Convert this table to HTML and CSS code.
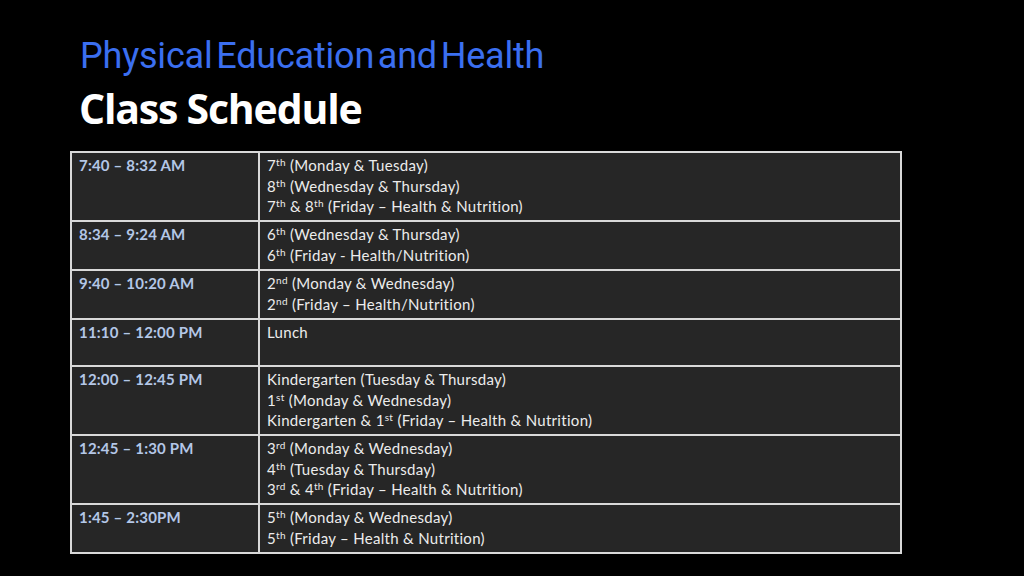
FILE: index.html
```html
<!DOCTYPE html>
<html>
<head>
<meta charset="utf-8">
<link rel="stylesheet" href="styles.css">
</head>
<body>
<div class="slide">
  <header class="head">
    <h1 class="title">Physical Education and Health</h1>
    <h2 class="subtitle">Class Schedule</h2>
  </header>
  <table class="sched">
    <tr class="r3">
      <td class="time">7:40 – 8:32 AM</td>
      <td class="desc">7<sup>th</sup> (Monday &amp; Tuesday)<br>8<sup>th</sup> (Wednesday &amp; Thursday)<br>7<sup>th</sup> &amp; 8<sup>th</sup> (Friday – Health &amp; Nutrition)</td>
    </tr>
    <tr class="r2">
      <td class="time">8:34 – 9:24 AM</td>
      <td class="desc">6<sup>th</sup> (Wednesday &amp; Thursday)<br>6<sup>th</sup> (Friday - Health/Nutrition)</td>
    </tr>
    <tr class="r2">
      <td class="time">9:40 – 10:20 AM</td>
      <td class="desc">2<sup>nd</sup> (Monday &amp; Wednesday)<br>2<sup>nd</sup> (Friday – Health/Nutrition)</td>
    </tr>
    <tr class="r1">
      <td class="time">11:10 – 12:00 PM</td>
      <td class="desc">Lunch</td>
    </tr>
    <tr class="r3">
      <td class="time">12:00 – 12:45 PM</td>
      <td class="desc">Kindergarten (Tuesday &amp; Thursday)<br>1<sup>st</sup> (Monday &amp; Wednesday)<br>Kindergarten &amp; 1<sup>st</sup> (Friday – Health &amp; Nutrition)</td>
    </tr>
    <tr class="r3">
      <td class="time">12:45 – 1:30 PM</td>
      <td class="desc">3<sup>rd</sup> (Monday &amp; Wednesday)<br>4<sup>th</sup> (Tuesday &amp; Thursday)<br>3<sup>rd</sup> &amp; 4<sup>th</sup> (Friday – Health &amp; Nutrition)</td>
    </tr>
    <tr class="r2">
      <td class="time">1:45 – 2:30PM</td>
      <td class="desc">5<sup>th</sup> (Monday &amp; Wednesday)<br>5<sup>th</sup> (Friday – Health &amp; Nutrition)</td>
    </tr>
  </table>
</div>
</body>
</html>
```
FILE: styles.css
```css
html, body {
  margin: 0;
  padding: 0;
  background: #000;
}
.slide {
  width: 1024px;
  height: 576px;
  background: #000;
  overflow: hidden;
}
.head {
  padding: 35px 0 0 80px;
}
.title {
  margin: 0;
  font-family: "Roboto", "Liberation Sans", sans-serif;
  font-weight: 400;
  font-size: 36px;
  line-height: 42px;
  letter-spacing: -0.2px;
  word-spacing: -5px;
  color: #3b6ff0;
}
.subtitle {
  margin: 6px 0 0 -1px;
  font-family: "Open Sans", "Liberation Sans", sans-serif;
  font-weight: 700;
  font-size: 41px;
  line-height: 50px;
  letter-spacing: -1.2px;
  color: #fff;
}
.sched {
  margin: 18px 0 0 70px;
  border-collapse: collapse;
  width: 832px;
  font-family: "Lato", "Open Sans", sans-serif;
  font-size: 15px;
  line-height: 20.5px;
}
.sched td {
  border: 2px solid #d9d9d9;
  background: #262626;
  vertical-align: top;
  padding: 2px 7px 0 7px;
  box-sizing: border-box;
}
.time {
  width: 188px;
  color: #b4c7e7;
  font-weight: 700;
  letter-spacing: 0.2px;
}
.desc {
  color: #ececec;
  letter-spacing: 0.3px;
}
.desc sup {
  font-size: 10px;
  line-height: 0;
  vertical-align: 5px;
}
.r3 { height: 69px; }
.r2 { height: 49px; }
.r1 { height: 47px; }
```
